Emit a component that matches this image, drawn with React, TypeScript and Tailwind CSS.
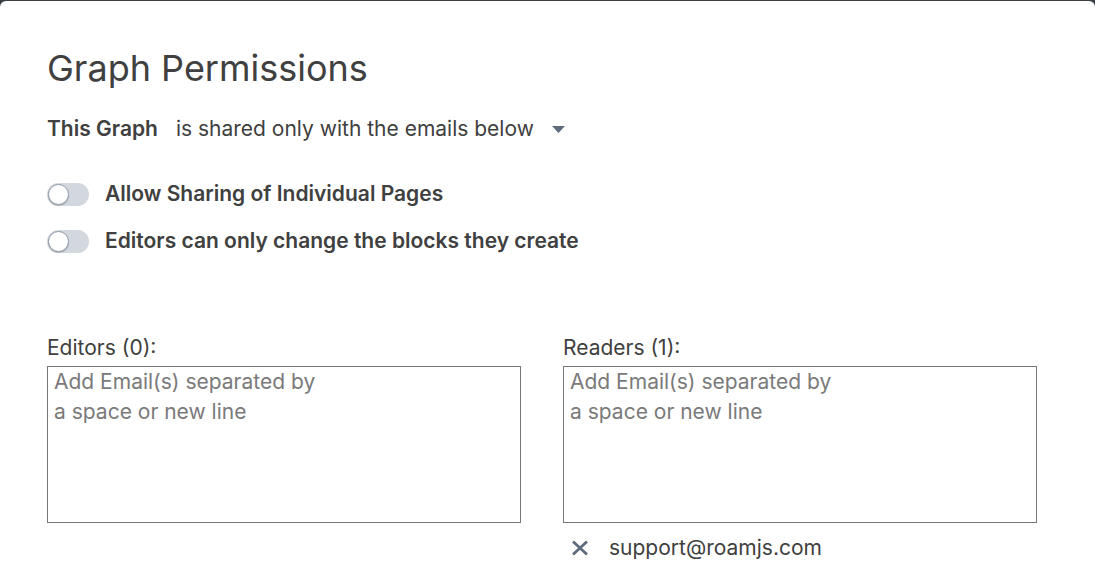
import React from "react";

function Toggle() {
  return (
    <div className="relative h-[23px] w-[42px] shrink-0 rounded-full bg-[#d3d8de]">
      <div className="absolute left-[1px] top-[1px] h-[21px] w-[21px] rounded-full border border-[#8f99a8] bg-white shadow-[0_1px_1px_rgba(17,20,24,0.2)]" />
    </div>
  );
}

function Column({ label, emails }: { label: string; emails: string[] }) {
  return (
    <div className="flex w-[474px] flex-col">
      <div className="text-[21px] leading-[26px] text-[#404040]">{label}</div>
      <div className="mt-[5px] h-[157px] w-[474px] overflow-hidden border border-[#767676] px-[6px]">
        <div className="whitespace-pre-line text-[21px] leading-[30px] text-[#7a7a7a]">
          {"Add Email(s) separated by\na space or new line"}
        </div>
      </div>
      {emails.map((e) => (
        <div key={e} className="mt-[10px] flex h-[30px] items-center">
          <svg width="18" height="18" viewBox="0 0 18 18" className="ml-[8px]">
            <path d="M2 2.5 L16 15.5 M16 2.5 L2 15.5" stroke="#5f6b7c" strokeWidth="2.8" strokeLinecap="butt" />
          </svg>
          <span className="ml-[20px] text-[21px] leading-[30px] text-[#404040]">{e}</span>
        </div>
      ))}
    </div>
  );
}

export default function App() {
  return (
    <div className="h-[587px] w-[1095px] overflow-hidden bg-[#3b3f44] pt-[1px]" style={{ fontFamily: "Inter, 'Noto Sans', sans-serif" }}>
      <div className="h-[600px] rounded-t-[6px] bg-white px-[47px] pt-[45px]">
        <h1 className="text-[36px] leading-[44px] font-normal text-[#404040]">Graph Permissions</h1>
        <div className="mt-[26px] flex items-center text-[21px] leading-[26px] text-[#404040]">
          <span className="font-semibold">This Graph</span>
          <span className="ml-[18px]">is shared only with the emails below</span>
          <svg width="13" height="7" viewBox="0 0 13 7" className="ml-[18px] mt-[1px]">
            <path d="M0 0 L13 0 L6.5 7 Z" fill="#5f6b7c" />
          </svg>
        </div>
        <div className="mt-[39px] flex h-[26px] items-center">
          <Toggle />
          <span className="ml-[16px] text-[21px] leading-[26px] font-semibold text-[#404040]">Allow Sharing of Individual Pages</span>
        </div>
        <div className="mt-[21px] flex h-[26px] items-center">
          <Toggle />
          <span className="ml-[16px] text-[21px] leading-[26px] font-semibold text-[#404040]">Editors can only change the blocks they create</span>
        </div>
        <div className="mt-[81px] flex gap-[42px]">
          <Column label="Editors (0):" emails={[]} />
          <Column label="Readers (1):" emails={["support@roamjs.com"]} />
        </div>
      </div>
    </div>
  );
}
